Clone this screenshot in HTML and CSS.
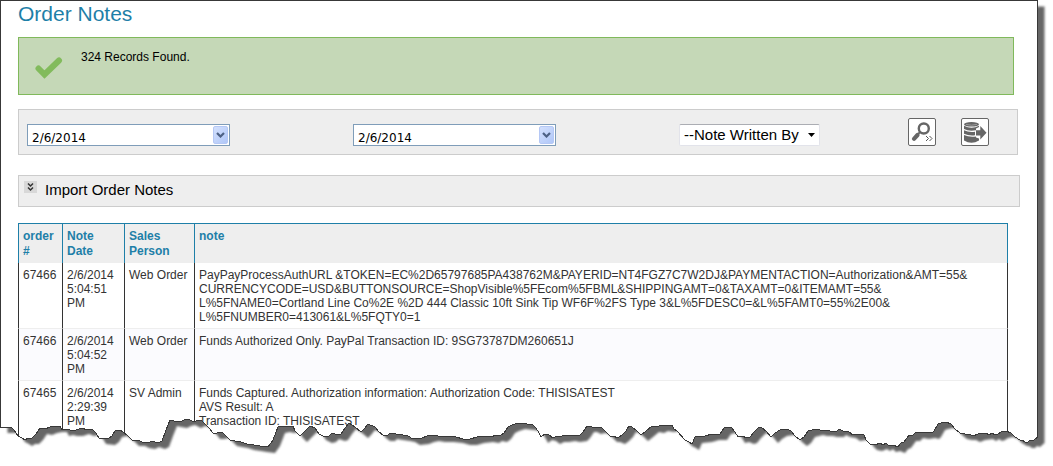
FILE: index.html
```html
<!DOCTYPE html>
<html lang="en">
<head>
<meta charset="utf-8">
<title>Order Notes</title>
<link rel="stylesheet" href="styles.css">
</head>
<body>
<main class="sheet">
  <h1 class="title">Order Notes</h1>

  <div class="alert" role="status">
    <svg class="alert-icon" viewBox="0 0 28 24" aria-hidden="true"><path d="M3.500 12.500 9.500 18.500 24 4.500" fill="none" stroke="#82bb5c" stroke-width="6" stroke-linecap="round"/></svg>
    <p class="alert-text">324 Records Found.</p>
  </div>

  <form class="filters">
    <div class="combo">
      <input class="combo-input" type="text" value="2/6/2014" aria-label="From date">
      <button class="combo-button" type="button" aria-label="Open start date list"><svg class="combo-arrow" viewBox="0 0 9 6" aria-hidden="true"><path d="M1 1 4.500 4.500 8 1" fill="none" stroke="#4d6185" stroke-width="2.200"/></svg></button>
    </div>
    <div class="combo">
      <input class="combo-input" type="text" value="2/6/2014" aria-label="To date">
      <button class="combo-button" type="button" aria-label="Open end date list"><svg class="combo-arrow" viewBox="0 0 9 6" aria-hidden="true"><path d="M1 1 4.500 4.500 8 1" fill="none" stroke="#4d6185" stroke-width="2.200"/></svg></button>
    </div>
    <div class="picker">
      <select class="picker-select" aria-label="Note written by"><option>--Note Written By</option></select>
      <svg class="picker-arrow" viewBox="0 0 7 4" aria-hidden="true"><path d="M0 0H7L3.500 4Z"/></svg>
    </div>
    <button class="tool" type="button" aria-label="Search">
      <svg class="tool-icon" viewBox="0 0 26 26" aria-hidden="true">
        <circle cx="14.800" cy="9.500" r="5" fill="none" stroke="#666" stroke-width="2.400"/>
        <path d="M11 13.200 9 15" stroke="#666" stroke-width="2"/>
        <path d="M8.500 16 5 19.800" stroke="#666" stroke-width="4.200" stroke-linecap="round"/>
        <path d="M17 17l2.500 2.500L17 22M20.500 17l2.500 2.500L20.500 22" fill="none" stroke="#555" stroke-width="1"/>
      </svg>
    </button>
    <button class="tool" type="button" aria-label="Export">
      <svg class="tool-icon" viewBox="0 0 26 26" aria-hidden="true">
        <g fill="#666">
          <ellipse cx="9.500" cy="5.300" rx="7.500" ry="2.300"/>
          <path d="M2 6.800Q9.500 10.500 17 6.800V8L14 9.500V11.200Q7 12.500 2 10Z"/>
          <path d="M2 11.300Q7 13.800 13 12.800V16.200Q7 17 2 14.700Z"/>
          <path d="M2 16Q7 18.400 14 17.500V18.500L17 19.500V21.500Q9.500 26 2 21.500Z"/>
          <path d="M14 11.300H18.300V7L24.500 13.700 18.300 20.500V16.500H14Z"/>
        </g>
        <path d="M4 5.400Q9.500 7 15 5.400" fill="none" stroke="#999" stroke-width="1"/>
      </svg>
    </button>
  </form>

  <section class="import">
    <button class="import-toggle" type="button" aria-label="Expand Import Order Notes"><svg class="import-icon" viewBox="0 0 13 12" aria-hidden="true"><path d="M4 2.500 6.500 5 9 2.500M4 6.500 6.500 9 9 6.500" fill="none" stroke="#333" stroke-width="1.500"/></svg></button>
    <h2 class="import-title">Import Order Notes</h2>
  </section>

  <table class="notes">
    <colgroup><col class="col-order"><col class="col-date"><col class="col-person"><col></colgroup>
    <thead>
      <tr><th scope="col">order<br>#</th><th scope="col">Note<br>Date</th><th scope="col">Sales<br>Person</th><th scope="col">note</th></tr>
    </thead>
    <tbody>
      <tr>
        <td>67466</td><td>2/6/2014<br>5:04:51<br>PM</td><td>Web Order</td>
        <td>PayPayProcessAuthURL &amp;TOKEN=EC%2D65797685PA438762M&amp;PAYERID=NT4FGZ7C7W2DJ&amp;PAYMENTACTION=Authorization&amp;AMT=55&amp;<br>CURRENCYCODE=USD&amp;BUTTONSOURCE=ShopVisible%5FEcom%5FBML&amp;SHIPPINGAMT=0&amp;TAXAMT=0&amp;ITEMAMT=55&amp;<br>L%5FNAME0=Cortland Line Co%2E %2D 444 Classic 10ft Sink Tip WF6F%2FS Type 3&amp;L%5FDESC0=&amp;L%5FAMT0=55%2E00&amp;<br>L%5FNUMBER0=413061&amp;L%5FQTY0=1</td>
      </tr>
      <tr>
        <td>67466</td><td>2/6/2014<br>5:04:52<br>PM</td><td>Web Order</td>
        <td>Funds Authorized Only. PayPal Transaction ID: 9SG73787DM260651J</td>
      </tr>
      <tr>
        <td>67465</td><td>2/6/2014<br>2:29:39<br>PM</td><td>SV Admin</td>
        <td>Funds Captured. Authorization information: Authorization Code: THISISATEST<br>AVS Result: A<br>Transaction ID: THISISATEST</td>
      </tr>
    </tbody>
  </table>

  <svg class="torn-edge" viewBox="0 0 1053 466" preserveAspectRatio="none" aria-hidden="true">
    <defs>
      <path id="paper" d="M.5 .5H1037.500V437L1033 441 1030 440 1028 442 1025 442 1022 440 1020 440 1015 437 1011 433 1006 431 1001 432 998 434 995 435 992 433 989 435 986 433 978 434 973 436 969 434 965 434 960 433 955 429 951 424 946 422 941 423 938 424 934 431 932 433 928 432 922 433 916 432 913 435 909 435 904 442 901 443 898 447 893 445 889 446 886 443 883 445 880 443 875 445 870 444 866 440 864 435 859 434 853 435 849 432 843 431 839 429 837 431 830 431 826 430 820 430 816 429 812 430 808 431 804 437 800 440 795 436 791 431 787 429 780 430 775 433 771 437 766 431 762 428 759 427 754 432 750 437 747 438 742 436 738 437 735 432 732 428 728 427 724 428 720 434 712 434 705 436 695 437 692 444 689 442 685 440 677 431 674 429 672 425 667 426 661 425 657 427 652 426 646 431 641 435 637 431 632 427 629 426 626 431 622 435 618 438 613 436 610 436 602 428 598 427 594 428 590 426 587 426 583 432 580 435 573 436 568 435 562 436 557 436 553 438 549 435 545 434 541 437 539 433 536 428 533 425 527 424 518 423 512 425 508 427 504 433 500 436 495 435 492 437 486 436 477 437 470 439 463 439 456 437 447 436 438 436 432 435 427 436 422 438 413 439 408 436 403 435 396 434 390 433 388 435 383 435 379 432 375 427 368 424 364 429 361 432 355 427 349 423 345 428 341 434 338 435 332 433 329 436 325 437 319 434 315 428 310 426 305 431 300 436 295 431 293 426 287 427 283 426 278 427 273 440 268 447 260 446 254 445 247 444 241 442 235 441 230 440 225 435 222 432 217 433 213 433 210 429 206 425 202 421 198 420 194 422 188 419 184 420 180 422 174 421 170 420 166 430 162 441 158 443 152 441 148 443 142 442 138 440 132 440 128 436 123 432 120 430 115 431 112 436 108 439 99 438 96 433 92 429 87 430 82 428 76 430 70 430 66 429 62 430 60 426 55 426 50 427 45 429 40 428 36 434 32 438 28 438 25 440 22 438 18 436 14 430 11 427 .5 427Z"/>
      <filter id="soft" x="-2%" y="-2%" width="104%" height="104%"><feGaussianBlur stdDeviation="1.3"/></filter>
      <mask id="outside"><path d="M0 0H1053V466H0Z" fill="#fff"/><use href="#paper" fill="#000"/></mask>
    </defs>
    <g mask="url(#outside)">
      <path d="M0 0H1053V466H0Z" fill="#fff"/>
      <use href="#paper" x="7" y="6" fill="#666" filter="url(#soft)"/>
    </g>
    <use class="outline" href="#paper" fill="none" stroke="#383838"/>
  </svg>
</main>
</body>
</html>
```
FILE: styles.css
```css
* {
  box-sizing: border-box;
}

body {
  margin: 0;
  background: #fff;
  color: #333;
  font: 12px/14px "Liberation Sans", Arial, sans-serif;
}

.sheet {
  position: relative;
  height: 100vh;
  min-height: 440px;
  overflow: hidden;
  padding: 2px 33px 0 18px;
}

.title {
  margin: 0 0 11px;
  color: #1e7fa8;
  font-size: 21px;
  font-weight: 400;
  line-height: 24px;
}

.alert {
  display: flex;
  align-items: flex-start;
  gap: 18px;
  min-height: 58px;
  margin: 0 6px 14px 0;
  padding: 12px 16px;
  border: 1px solid #80b95b;
  background: #c5d8b7;
  color: #000;
}

.alert-icon {
  width: 28px;
  height: 24px;
  margin-top: 6px;
}

.alert-text {
  margin: 0;
}

.filters {
  display: grid;
  grid-template-columns: 326fr 326fr 229fr 53fr 56fr;
  align-items: end;
  margin: 0 2px 20px 0;
  padding: 8px 0 8px 8px;
  border: 1px solid #ccc;
  background: #eee;
}

.combo {
  display: flex;
  width: 203px;
  height: 22px;
  border: 1px solid #7f9db9;
  background: #fff;
}

.combo-input {
  flex: 1;
  min-width: 0;
  padding: 5px 4px 0;
  border: 0;
  background: transparent;
  color: #000;
  font: 12px/14px Verdana, "DejaVu Sans", sans-serif;
}

.combo-button {
  display: grid;
  place-items: center;
  width: 15px;
  height: 18px;
  margin: 1px;
  padding: 0;
  border: 1px solid #b5c8f5;
  border-radius: 2px;
  background: linear-gradient(135deg, #d3e0fd, #b0c7f8);
}

.combo-arrow {
  width: 9px;
  height: 6px;
}

.picker {
  display: grid;
  align-items: center;
  width: 141px;
}

.picker-select {
  grid-area: 1 / 1;
  width: 100%;
  height: 22px;
  padding: 0 4px;
  border: 1px solid #e2e3ea;
  border-top-color: #abadb3;
  border-radius: 2px;
  appearance: none;
  background: #fff;
  color: #000;
  font: 15px/18px "Liberation Sans", Arial, sans-serif;
}

.picker-arrow {
  grid-area: 1 / 1;
  justify-self: end;
  width: 7px;
  height: 4px;
  margin-right: 5px;
  pointer-events: none;
}

.tool {
  width: 28px;
  height: 28px;
  padding: 0;
  border: 1px solid #666;
  border-radius: 2px;
  background: #fff;
}

.tool-icon {
  display: block;
  width: 26px;
  height: 26px;
}

.import {
  display: flex;
  align-items: flex-start;
  gap: 8px;
  margin-bottom: 16px;
  padding: 5px 5px 7px;
  border: 1px solid #ccc;
  background: #eee;
}

.import-toggle {
  width: 13px;
  height: 12px;
  padding: 0;
  border: 0;
  background: #d8d8d8;
}

.import-icon {
  display: block;
  width: 13px;
  height: 12px;
}

.import-title {
  margin: 0;
  color: #000;
  font-size: 15px;
  font-weight: 400;
  line-height: 18px;
}

.notes {
  width: calc(100% - 12px);
  border-spacing: 0;
  table-layout: fixed;
}

.col-order {
  width: 44px;
}

.col-date {
  width: 62px;
}

.col-person {
  width: 70px;
}

.notes th,
.notes td {
  padding: 5px 4px 4px;
  border-left: 1px solid #333;
  text-align: left;
  vertical-align: top;
}

.notes th:last-child,
.notes td:last-child {
  border-right: 1px solid #333;
}

.notes th {
  border-top: 1px solid #1e7fa8;
  border-color: #1e7fa8;
  background: #eee;
  color: #1e7fa8;
  line-height: 15px;
}

.notes th:last-child {
  border-right-color: #1e7fa8;
}

.notes td {
  border-bottom: 1px solid #eee;
  white-space: nowrap;
}

.notes tr:nth-child(even) td {
  background: #fbfbfe;
}

.notes tbody tr:last-child td {
  height: 84px;
}

.torn-edge {
  position: absolute;
  inset: 0;
  width: 100%;
  height: 100%;
  pointer-events: none;
}

.outline {
  shape-rendering: crispEdges;
}
```
